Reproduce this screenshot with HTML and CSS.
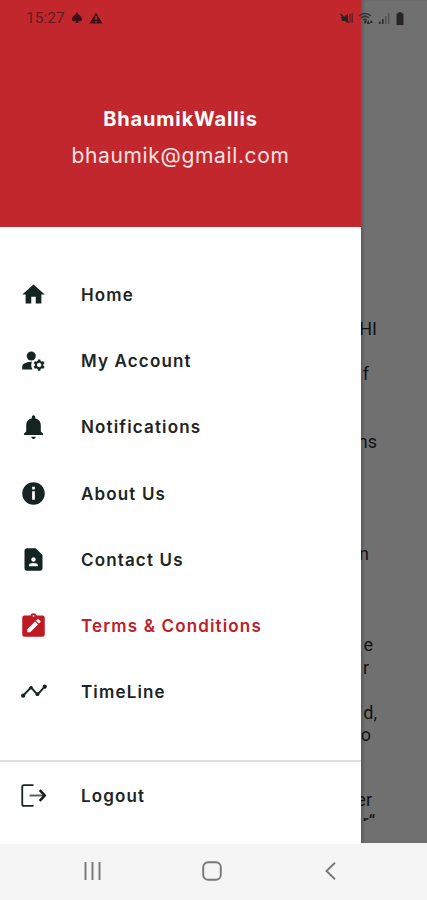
FILE: index.html
```html
<!DOCTYPE html>
<html lang="en">
<head>
  <meta charset="UTF-8">
  <meta name="viewport" content="width=device-width, initial-scale=1.0">
  <title>Terms &amp; Conditions</title>
  <link rel="stylesheet" href="styles.css">
</head>
<body>
  <div class="screen">
    <!-- Status bar -->
    <header class="status-bar">
      <div class="status-left">
        <span class="clock">15:27</span>
        <svg width="12" height="12" viewBox="0 0 12 12"><path d="M6 0C5 3 1 4 1 7.200c0 2.400 3 2.800 4.300 1L4 11h4L6.700 8.200C8 10 11 9.600 11 7.200 11 4 7 3 6 0z"/></svg>
        <svg width="14" height="12" viewBox="0 0 14 12"><path fill-rule="evenodd" d="M7 0.500L0.500 11.500h13zM6.300 4h1.500v4H6.300zM6.300 9h1.500v1.300H6.300z"/></svg>
      </div>
      <div class="status-right">
        <svg width="14" height="13" viewBox="0 0 14 13"><path d="M1 5l3 0 4-3.500V11L5 9H2z"/><path d="M0.500 2l8 8.500" fill="none" stroke="#222" stroke-width="1.300"/><path d="M10 2v9M12.200 1v10" fill="none" stroke="#5a1c20" stroke-width="1.200"/></svg>
        <svg class="wifi" width="17" height="13" viewBox="0 0 17 13"><path d="M1 4Q7 -1 13 4M3 6Q7 2.500 11 6M5 8Q7 6.500 9 8" fill="none" stroke="#333" stroke-width="1.300"/><path d="M7 8l2 2-2 2-1-2zM10 8l2 4h-3zM13 8l2 3h-3z"/></svg>
        <svg width="12" height="12" viewBox="0 0 12 12"><path d="M0 9.500h1.500V12H0zM3 7h1.500v5H3z"/><path d="M6 4h1.500v8H6zM9 1h1.500v11H9z" opacity=".4"/></svg>
        <svg class="battery" width="8" height="13" viewBox="0 0 8 13"><path d="M2.500 0h3v1.500H7.500V13h-7V1.500h2z"/></svg>
      </div>
    </header>

    <div class="content">
      <!-- Navigation drawer -->
      <aside class="drawer">
        <div class="profile">
          <div class="profile-name">BhaumikWallis</div>
          <div class="profile-email">bhaumik@gmail.com</div>
        </div>
        <nav class="menu">
          <a class="menu-item home">
            <svg viewBox="0 0 24 24"><path d="M10 20v-6h4v6h5v-8h3L12 3 2 12h3v8z"/></svg>
            <span>Home</span>
          </a>
          <a class="menu-item account">
            <svg viewBox="0 0 24 24"><circle cx="10" cy="8" r="4"/><path d="M10.670 13.020c-.22-.01-.44-.02-.67-.02-2.420 0-4.680.67-6.610 1.820-.88.52-1.390 1.500-1.390 2.530V20h9.260c-.79-1.130-1.260-2.510-1.260-4 0-1.070.25-2.070.67-2.980zM20.750 16c0-.22-.03-.42-.06-.63l1.140-1.010-1-1.730-1.450.49c-.32-.27-.68-.48-1.080-.63L18 11h-2l-.3 1.490c-.4.15-.76.36-1.080.63l-1.450-.49-1 1.730 1.140 1.010c-.03.21-.06.41-.06.63s.03.42.06.63l-1.140 1.010 1 1.730 1.450-.49c.32.27.68.48 1.080.63L16 21h2l.3-1.490c.4-.15.76-.36 1.080-.63l1.450.49 1-1.730-1.140-1.010c.03-.21.06-.41.06-.63zM17 18c-1.100 0-2-.9-2-2s.9-2 2-2 2 .9 2 2-.9 2-2 2z"/></svg>
            <span>My Account</span>
          </a>
          <a class="menu-item notifications">
            <svg viewBox="0 0 24 24"><path d="M10 21h4c0 1-.9 2-2 2s-2-1-2-2zm8.500-4.500V11c0-3.200-1.800-5.700-5-6.400V3.500C13.500 2.700 12.800 2 12 2s-1.500.7-1.500 1.500v1.100c-3.200.7-5 3.200-5 6.400v5.500l-2 2v1h17v-1z"/></svg>
            <span>Notifications</span>
          </a>
          <a class="menu-item about">
            <svg viewBox="0 0 24 24"><path fill-rule="evenodd" d="M12 2a10 10 0 100 20 10 10 0 000-20zm1.200 15.500h-2.400V10h2.400zm0-9h-2.400V6h2.400z"/></svg>
            <span>About Us</span>
          </a>
          <a class="menu-item contact">
            <svg viewBox="0 0 24 24"><path d="M14 2H6c-1.100 0-2 .9-2 2v16c0 1.100.89 2 1.990 2H18c1.100 0 2-.9 2-2V8l-6-6zm-2 8c1.100 0 2 .9 2 2s-.9 2-2 2-2-.9-2-2 .9-2 2-2zm4 8H8v-.57c0-.81.48-1.530 1.220-1.850.85-.37 1.790-.58 2.780-.58s1.930.21 2.780.58c.74.32 1.220 1.040 1.220 1.850V18z"/></svg>
            <span>Contact Us</span>
          </a>
          <a class="menu-item terms active">
            <svg viewBox="0 0 24 24"><path fill-rule="evenodd" d="M19 3h-4.200a3 3 0 00-5.600 0H4a2 2 0 00-2 2v15a2 2 0 002 2h16a2 2 0 002-2V5a2 2 0 00-2-2zM12 2.700a.8.8 0 110 1.600.8.8 0 010-1.600zM9.100 18H6.500v-2.600l6.900-6.900 2.600 2.600zm9-9l-1.300 1.300-2.600-2.600 1.300-1.300c.3-.3.7-.3 1 0l1.600 1.600c.3.3.3.7 0 1z"/></svg>
            <span>Terms &amp; Conditions</span>
          </a>
          <a class="menu-item timeline">
            <svg viewBox="0 0 24 24"><path d="M2.700 15.800L9.800 8.300l5.700 6.500 6.700-7.300" fill="none" stroke="#142423" stroke-width="1.700"/><circle cx="2.800" cy="15.700" r="1.900"/><circle cx="9.800" cy="8.700" r="1.600"/><circle cx="15.500" cy="14.400" r="1.700"/><circle cx="22" cy="7.700" r="1.900"/></svg>
            <span>TimeLine</span>
          </a>
        </nav>
        <div class="drawer-footer">
          <a class="menu-item logout">
            <svg viewBox="0 0 24 24"><path d="M12 2.700H3.500Q2 2.700 2 4.200v15.600q0 1.500 1.500 1.500H12" fill="none" stroke="#1c2424" stroke-width="1.600"/><path d="M8.500 12H21" stroke="#555b5b" stroke-width="1.700"/><path d="M17.500 7.300L22 12l-4.500 4.700" fill="none" stroke="#111818" stroke-width="2.200"/></svg>
            <span>Logout</span>
          </a>
        </div>
      </aside>

      <!-- Dimmed page behind the drawer -->
      <main class="page">
        <p class="line w16">HI</p>
        <p class="line w8 skip-1">f</p>
        <p class="line w16 skip-2">ns</p>
        <p class="line w8 skip-4">n</p>
        <p class="line w12 section">e</p>
        <p class="line w8">r</p>
        <p class="line w16 skip-1">d,</p>
        <p class="line w10">o</p>
        <p class="line w11 paragraph">er</p>
        <p class="line w14 cut">r“</p>
      </main>
    </div>

    <!-- System navigation -->
    <footer class="nav-bar">
      <svg width="20" height="20" viewBox="0 0 20 20"><path d="M2.500 1v18M9.500 1v18M16.500 1v18"/></svg>
      <svg width="20" height="20" viewBox="0 0 20 20"><rect x="1.200" y="1.200" width="17.600" height="17.600" rx="5"/></svg>
      <svg width="20" height="20" viewBox="0 0 20 20"><path d="M14 1.800L5.500 10l8.500 8.200"/></svg>
    </footer>
  </div>
</body>
</html>
```
FILE: styles.css
```css
* {
  box-sizing: border-box;
}
body {
  margin: 0;
  font-family: Inter, "Open Sans", sans-serif;
  background: #f5f5f5;
}
.screen {
  position: relative;
  width: 427px;
  height: 900px;
  overflow: hidden;
}
.content {
  display: flex;
  height: 844px;
}
/* Status bar */
.status-bar {
  position: absolute;
  top: 0;
  left: 0;
  z-index: 2;
  display: flex;
  justify-content: space-between;
  align-items: center;
  width: 100%;
  height: 36px;
  padding: 0 23px 0 26px;
  font-family: Roboto, sans-serif;
  font-size: 15.500px;
  color: #651a1f;
}
.status-left,
.status-right {
  display: flex;
  align-items: center;
}
.status-left {
  gap: 6px;
  fill: #3d1115;
}
.status-right {
  gap: 4px;
  fill: #2a2525;
}
.clock {
  width: 39px;
}
.battery {
  margin-left: 1px;
}
/* Drawer */
.drawer {
  flex: none;
  width: 361px;
  background: #fff;
}
.profile {
  height: 227px;
  padding-top: 106px;
  background: #c3272e;
  color: #fff;
  text-align: center;
}
.profile-name {
  font-size: 20px;
  line-height: 26px;
  font-weight: 700;
  letter-spacing: 0.850px;
}
.profile-email {
  margin-top: 10px;
  font-size: 21px;
  line-height: 28px;
  letter-spacing: 0.650px;
  color: #fbe3e1;
}
.menu {
  padding-top: 34px;
}
.menu-item {
  display: flex;
  align-items: center;
  height: 66.300px;
  padding-left: 20px;
  color: #1c2424;
  fill: #142423;
  font-size: 17px;
  font-weight: 600;
  letter-spacing: 1.150px;
}
.menu-item svg {
  width: 27px;
  height: 27px;
  margin-right: 34px;
}
.menu-item span {
  padding-top: 1px;
}
.active {
  color: #bd2028;
  fill: #bd1a22;
}
.drawer-footer {
  margin-top: 35px;
  border-top: 2px solid #dedede;
}
/* Page behind the drawer */
.page {
  flex: 1;
  height: 843px;
  padding-top: 318px;
  overflow: hidden;
  background: #707070;
  box-shadow: inset 3px 0 3px -1px #5c5c5c;
  font-family: Roboto, sans-serif;
  font-size: 18px;
  color: #121212;
}
.line {
  display: flex;
  justify-content: flex-end;
  height: 22.500px;
  margin: 0;
  line-height: 22.500px;
  overflow: hidden;
}
.w8 { width: 8px; }
.w10 { width: 10px; }
.w11 { width: 11px; }
.w12 { width: 12px; }
.w14 { width: 14px; }
.w16 { width: 16px; }
.skip-1 { margin-top: 22.500px; }
.skip-2 { margin-top: 45px; }
.skip-4 { margin-top: 90px; }
.section { margin-top: 68.500px; }
.paragraph { margin-top: 42px; }
.cut { height: 10px; }
/* System navigation */
.nav-bar {
  display: flex;
  justify-content: space-between;
  height: 56px;
  padding: 17px 86px 0 83px;
  background: #f5f5f5;
}
.nav-bar svg {
  fill: none;
  stroke: #777;
  stroke-width: 1.900;
}
```
